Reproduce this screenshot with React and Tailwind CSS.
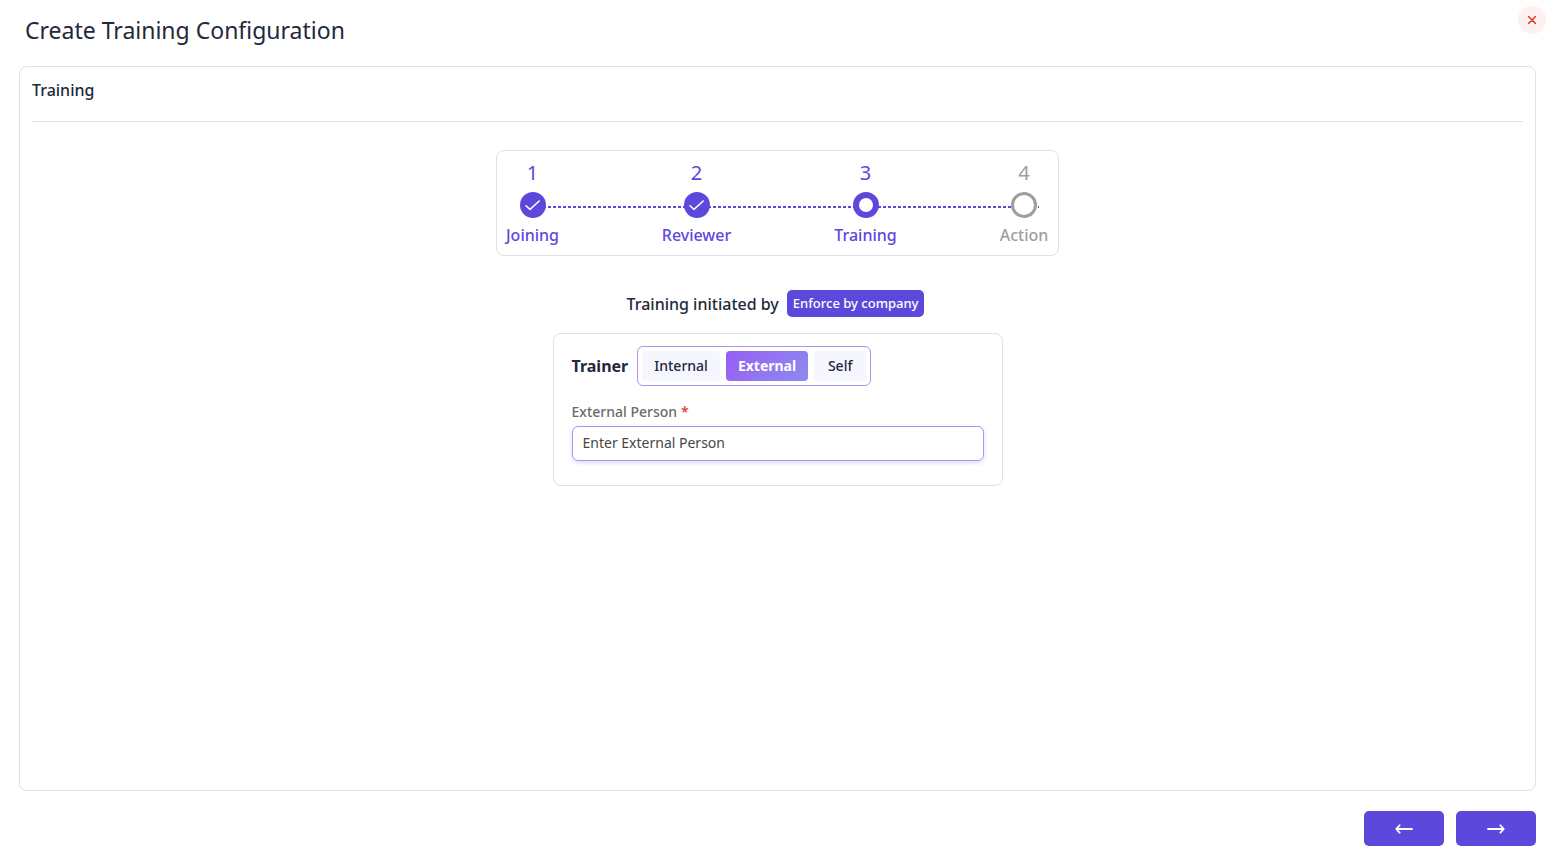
import { useState } from 'react';
import clsx from 'clsx';

const steps = [
  { id: 1, label: 'Joining', status: 'done', width: 'w-[55px]' },
  { id: 2, label: 'Reviewer', status: 'done', width: 'w-[73px]' },
  { id: 3, label: 'Training', status: 'current', width: 'w-[65px]' },
  { id: 4, label: 'Action', status: 'pending', width: 'w-[52px]' },
];

const trainerTypes = ['Internal', 'External', 'Self'];

const StepMarker = ({ status }) => {
  if (status === 'done') {
    return (
      <span className="flex h-[26px] w-[26px] items-center justify-center rounded-full bg-[#5d48dc]">
        <svg viewBox="0 0 16 12" className="h-3 w-4" fill="none" stroke="white" strokeWidth="1.5" strokeLinecap="round" strokeLinejoin="round">
          <path d="M1 6.8 L5 10.4 L14.2 2" />
        </svg>
      </span>
    );
  }

  return (
    <span
      className={clsx(
        'block h-[26px] w-[26px] rounded-full bg-white',
        status === 'current' ? 'border-6 border-[#5d48dc]' : 'border-3 border-[#9e9e9e]'
      )}
    />
  );
};

const Stepper = () => (
  <div className="relative rounded-lg border border-[#e0e0e0] px-2 pt-2 pb-2">
    {/* Dashed track behind the markers */}
    <div className="absolute top-[55px] right-[19px] left-9 h-0.5 bg-[repeating-linear-gradient(90deg,#5d48dc_0_3px,transparent_3px_5px)]" />
    <ol className="relative flex gap-[100px]">
      {steps.map((step) => (
        <li
          key={step.id}
          aria-current={step.status === 'current' ? 'step' : undefined}
          className={clsx(
            'flex flex-col items-center',
            step.width,
            step.status === 'pending' ? 'text-[#9e9e9e]' : 'text-[#5d48dc]'
          )}
        >
          <span className="mb-[5px] text-xl leading-7">{step.id}</span>
          <StepMarker status={step.status} />
          <span className="mt-[5px] text-base leading-6 font-medium whitespace-nowrap">{step.label}</span>
        </li>
      ))}
    </ol>
  </div>
);

const App = () => {
  const [trainer, setTrainer] = useState('External');
  const [person, setPerson] = useState('');

  return (
    <div className="flex min-h-screen flex-col bg-white pr-[18px] pb-[18px] pl-[19px] font-['Noto_Sans',sans-serif] text-[#22293b]">
      {/* Header */}
      <header className="flex items-start justify-between pb-[18px]">
        <h1 className="pt-3 pl-1.5 text-[23px] leading-9">Create Training Configuration</h1>
        <button
          type="button"
          aria-label="Close"
          className="mt-1.5 -mr-2.5 flex h-7 w-7 items-center justify-center rounded-full bg-[#fdf0f0] text-[#d93a2b]"
        >
          <svg viewBox="0 0 8 8" className="h-2 w-2" stroke="currentColor" strokeWidth="1.5" strokeLinecap="round">
            <path d="M0.5 0.5 L7.5 7.5 M7.5 0.5 L0.5 7.5" />
          </svg>
        </button>
      </header>

      {/* Panel */}
      <main className="flex flex-1 flex-col rounded-lg border border-[#e0e0e0] px-3">
        <h2 className="border-b border-[#e0e0e0] pt-[11px] pb-[19px] text-base leading-6 font-medium">Training</h2>

        <div className="flex flex-col items-center pt-7">
          <Stepper />

          <div className="mt-[34px] flex items-center gap-2 pr-1">
            <span className="text-base leading-6 font-medium">Training initiated by</span>
            <span className="rounded-[5px] bg-[#5d48dc] px-1.5 py-1 text-[13px] leading-[19px] font-medium text-white">
              Enforce by company
            </span>
          </div>

          <section className="mt-4 w-full max-w-[450px] rounded-lg border border-[#e0e0e0] px-[18px] pt-3 pb-6">
            <div className="flex items-center gap-[9px]">
              <span id="trainer-label" className="text-base leading-6 font-bold">Trainer</span>
              <div
                role="group"
                aria-labelledby="trainer-label"
                className="flex gap-1.5 rounded-md border border-[#a895ee] p-1"
              >
                {trainerTypes.map((type) => (
                  <button
                    key={type}
                    type="button"
                    aria-pressed={trainer === type}
                    onClick={() => setTrainer(type)}
                    className={clsx(
                      'h-[30px] min-w-13 rounded px-3 text-sm',
                      trainer === type
                        ? 'bg-linear-135 from-[#965cf3] to-[#8c8bf0] font-bold text-white'
                        : 'bg-[#f6f6fe] font-medium'
                    )}
                  >
                    {type}
                  </button>
                ))}
              </div>
            </div>

            <label htmlFor="external-person" className="mt-4 block text-sm leading-5 font-medium text-[#6b6b6b]">
              External Person<span className="ml-1 text-[#e03a2b]">*</span>
            </label>
            <input
              id="external-person"
              type="text"
              value={person}
              onChange={(e) => setPerson(e.target.value)}
              placeholder="Enter External Person"
              className="mt-1 block h-[35px] w-full rounded-md border border-[#a895ee] px-2.5 pb-0.5 text-sm shadow-[0_2px_4px_#e2d8fb] outline-none placeholder:text-[#464646]"
            />
          </section>
        </div>
      </main>

      {/* Navigation */}
      <footer className="mt-5 flex justify-end gap-3">
        <button type="button" aria-label="Previous" className="flex h-[35px] w-20 items-center justify-center rounded-[5px] bg-[#5d48dc]">
          <svg viewBox="0 0 18 10" className="h-2.5 w-[18px]" fill="none" stroke="white" strokeWidth="1.8" strokeLinecap="round" strokeLinejoin="round">
            <path d="M17 5 H1.5 M4.6 1.3 L1.2 5 L4.6 8.7" />
          </svg>
        </button>
        <button type="button" aria-label="Next" className="flex h-[35px] w-20 items-center justify-center rounded-[5px] bg-[#5d48dc]">
          <svg viewBox="0 0 18 10" className="h-2.5 w-[18px]" fill="none" stroke="white" strokeWidth="1.8" strokeLinecap="round" strokeLinejoin="round">
            <path d="M1 5 H16.5 M13.4 1.3 L16.8 5 L13.4 8.7" />
          </svg>
        </button>
      </footer>
    </div>
  );
};

export default App;
